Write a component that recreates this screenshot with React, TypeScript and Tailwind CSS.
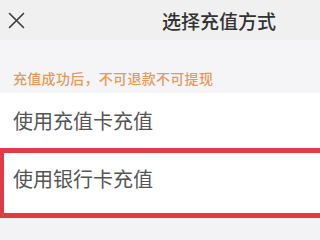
import React from 'react';

const font = { fontFamily: '"Noto Sans CJK SC", "Noto Sans", sans-serif' };

const App = () => {
  return (
    <div className="w-[320px] h-[240px] overflow-hidden bg-[#f3f3f6]" style={font}>
      {/* Header */}
      <div className="h-[40px] bg-[#f0f0f1] flex items-center">
        <svg className="ml-[8px] w-[17px] h-[17px]" viewBox="0 0 17 17" fill="none" stroke="#3a3a3a" strokeWidth="1.6" strokeLinecap="round">
          <path d="M1.5 1.5 L15.5 15.5 M15.5 1.5 L1.5 15.5" />
        </svg>
        <div className="ml-[137px] text-[19px] leading-none font-medium text-[#333]">选择充值方式</div>
      </div>

      {/* Notice */}
      <div className="h-[53px] bg-[#f5f5f7] pl-[13px] pt-[30px]">
        <div className="text-[14px] leading-[16px] font-medium text-[#e8995a] tracking-[0.3px]">充值成功后，不可退款不可提现</div>
      </div>

      {/* Options */}
      <div className="bg-white">
        <div className="h-[55px] flex items-center pl-[13px] text-[20px] text-[#555]">使用充值卡充值</div>
        <div className="h-[70px] border-y-[5px] border-l-[4px] border-[#e53a45] flex items-center pl-[9px] pb-[8px] text-[20px] text-[#555]">
          使用银行卡充值
        </div>
      </div>
    </div>
  );
};

export default App;
